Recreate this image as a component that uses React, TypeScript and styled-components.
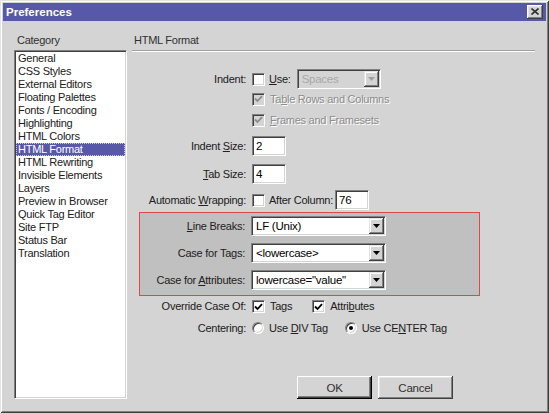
import React from "react";
import styled, { createGlobalStyle } from "styled-components";

const GlobalStyle = createGlobalStyle`
  html, body { margin: 0; padding: 0; background: #d4d4d4; }
  body {
    font-family: "Liberation Sans", Arial, sans-serif;
    font-size: 11px;
    letter-spacing: -0.25px;
    color: #202020;
  }
  * { box-sizing: border-box; }
`;

const FACE = "#d4d4d4";
const BLUE = "#5858a8";

const Window = styled.div`
  width: 549px;
  height: 413px;
  background: ${FACE};
  padding: 3px;
  box-shadow: inset 1px 1px #e4e4e4, inset -1px -1px #404040, inset 2px 2px #ffffff,
    inset -2px -2px #808080;
  display: flex;
  flex-direction: column;
`;

const TitleBar = styled.div`
  height: 18px;
  background: ${BLUE};
  display: flex;
  align-items: center;
  padding: 0 3px;
`;

const TitleText = styled.span`
  color: #fff;
  font-weight: bold;
  font-size: 11.5px;
  letter-spacing: 0;
`;

const CloseButton = styled.div`
  margin-left: auto;
  width: 16px;
  height: 14px;
  background: ${FACE};
  box-shadow: inset -1px -1px #404040, inset 1px 1px #ffffff, inset -2px -2px #808080,
    inset 2px 2px #e4e4e4;
  display: flex;
  align-items: center;
  justify-content: center;
  padding-bottom: 1px;
`;

const Body = styled.div`
  flex: 1;
  display: flex;
`;

const LeftColumn = styled.div`
  margin-left: 11px;
  width: 113px;
  display: flex;
  flex-direction: column;
`;

const RightColumn = styled.div`
  margin-left: 5px;
  width: 403px;
  display: flex;
  flex-direction: column;
`;

const SectionTitle = styled.div<{ $pl: number }>`
  padding-top: 13px;
  padding-left: ${(p) => p.$pl}px;
  line-height: 13px;
  height: 26px;
  color: #303030;
`;

const ListBox = styled.div`
  margin-top: 3px;
  height: 349px;
  background: #fff;
  border: 1px solid;
  border-color: #808080 #ffffff #ffffff #808080;
  box-shadow: inset 1px 1px #404040, inset -1px -1px ${FACE};
  padding: 1px;
  display: flex;
  flex-direction: column;
`;

const ListItem = styled.div<{ $selected?: boolean }>`
  height: 13px;
  line-height: 13px;
  padding-left: 2px;
  white-space: nowrap;
  background: ${(p) => (p.$selected ? BLUE : "transparent")};
  color: ${(p) => (p.$selected ? "#fff" : "#202020")};
  outline: ${(p) => (p.$selected ? "1px dotted #c8c8ff" : "none")};
  outline-offset: -1px;
`;

const Separator = styled.div`
  margin-top: 3px;
  height: 2px;
  border-top: 1px solid #a0a0a0;
  border-bottom: 1px solid #ffffff;
`;

const Form = styled.div`
  margin-top: 17px;
  margin-left: 7px;
  width: 341px;
  display: flex;
  flex-direction: column;
`;

const Row = styled.div<{ $h: number; $mt?: number; $lw?: number }>`
  display: grid;
  grid-template-columns: ${(p) => p.$lw ?? 107}px auto;
  column-gap: 6px;
  align-items: center;
  height: ${(p) => p.$h}px;
  margin-top: ${(p) => p.$mt ?? 0}px;
`;

const Label = styled.div`
  text-align: right;
  white-space: nowrap;
  line-height: 13px;
  color: #202020;
`;

const Key = styled.span`
  text-decoration: underline;
  text-underline-offset: 1px;
`;

const Controls = styled.div`
  display: flex;
  align-items: center;
  height: 100%;
`;

const Text = styled.span<{ $ml?: number; $disabled?: boolean }>`
  margin-left: ${(p) => p.$ml ?? 0}px;
  white-space: nowrap;
  line-height: 13px;
  color: ${(p) => (p.$disabled ? "#8c8c8c" : "#202020")};
  text-shadow: ${(p) => (p.$disabled ? "1px 1px 0 #ffffff" : "none")};
`;

const sunken = `
  border: 1px solid;
  border-color: #808080 #ffffff #ffffff #808080;
  box-shadow: inset 1px 1px #404040, inset -1px -1px ${FACE};
`;

const CheckBox = styled.span<{ $disabled?: boolean; $ml?: number }>`
  ${sunken}
  width: 13px;
  height: 13px;
  flex: none;
  margin-left: ${(p) => p.$ml ?? 0}px;
  background: ${(p) => (p.$disabled ? FACE : "#fff")};
  display: flex;
  align-items: center;
  justify-content: center;
`;

const Radio = styled.span<{ $ml?: number }>`
  width: 12px;
  height: 12px;
  flex: none;
  margin-left: ${(p) => p.$ml ?? 0}px;
  border-radius: 50%;
  background: #fff;
  border: 1px solid;
  border-color: #808080 #ffffff #ffffff #808080;
  box-shadow: inset 1px 1px #404040, inset -1px -1px ${FACE};
  display: flex;
  align-items: center;
  justify-content: center;
`;

const RadioDot = styled.span`
  width: 4px;
  height: 4px;
  border-radius: 50%;
  background: #000;
`;

const TextField = styled.div<{ $w: number; $ml?: number }>`
  ${sunken}
  width: ${(p) => p.$w}px;
  height: 20px;
  margin-left: ${(p) => p.$ml ?? 0}px;
  background: #fff;
  color: #000;
  padding-left: 3px;
  display: flex;
  align-items: center;
  font-size: 11.5px;
`;

const SelectBox = styled.div<{ $w: number; $ml?: number; $disabled?: boolean }>`
  ${sunken}
  width: ${(p) => p.$w}px;
  height: 20px;
  margin-left: ${(p) => p.$ml ?? 0}px;
  background: ${(p) => (p.$disabled ? FACE : "#fff")};
  color: ${(p) => (p.$disabled ? "#a8a8a8" : "#000")};
  display: flex;
  align-items: center;
  padding: 1px 1px 1px 4px;
  font-size: 11.5px;
`;

const SelectValue = styled.span`
  flex: 1;
  white-space: nowrap;
`;

const ArrowButton = styled.span`
  width: 15px;
  height: 16px;
  background: ${FACE};
  box-shadow: inset -1px -1px #404040, inset 1px 1px #e4e4e4, inset -2px -2px #808080,
    inset 2px 2px #ffffff;
  display: flex;
  align-items: center;
  justify-content: center;
`;

const HighlightBox = styled.div`
  margin-top: 2px;
  width: 341px;
  border: 1px solid #e04848;
  background: #c0c0c0;
  padding: 3px 0 5px 0;
  display: flex;
  flex-direction: column;
  gap: 7px;
`;

const ButtonRow = styled.div`
  margin-top: 37px;
  padding-left: 165px;
  display: flex;
  gap: 6px;
`;

const PushButton = styled.div<{ $default?: boolean }>`
  width: 75px;
  height: 23px;
  background: ${FACE};
  display: flex;
  align-items: center;
  justify-content: center;
  color: #303030;
  font-size: 11.5px;
  box-shadow: ${(p) =>
    p.$default
      ? "inset -1px -1px #000000, inset 1px 1px #ffffff, inset -2px -2px #404040, inset -3px -3px #808080"
      : "inset -1px -1px #404040, inset 1px 1px #ffffff, inset -2px -2px #808080, inset 2px 2px #e4e4e4"};
`;

const Check = ({ color }: { color: string }) => (
  <svg width="9" height="8" viewBox="0 0 9 8">
    <polyline points="1,3.5 3.5,6 8,1.2" fill="none" stroke={color} strokeWidth="1.8" />
  </svg>
);

const Arrow = ({ color }: { color: string }) => (
  <svg width="7" height="4" viewBox="0 0 7 4">
    <polygon points="0,0 7,0 3.5,4" fill={color} />
  </svg>
);

const Select = ({ value, w, ml, disabled }: { value: string; w: number; ml?: number; disabled?: boolean }) => (
  <SelectBox $w={w} $ml={ml} $disabled={disabled}>
    <SelectValue>{value}</SelectValue>
    <ArrowButton>
      <Arrow color={disabled ? "#a0a0a0" : "#000"} />
    </ArrowButton>
  </SelectBox>
);

const categories = [
  "General",
  "CSS Styles",
  "External Editors",
  "Floating Palettes",
  "Fonts / Encoding",
  "Highlighting",
  "HTML Colors",
  "HTML Format",
  "HTML Rewriting",
  "Invisible Elements",
  "Layers",
  "Preview in Browser",
  "Quick Tag Editor",
  "Site FTP",
  "Status Bar",
  "Translation",
];

export default function App() {
  return (
    <>
      <GlobalStyle />
      <Window>
        <TitleBar>
          <TitleText>Preferences</TitleText>
          <CloseButton>
            <svg width="8" height="7" viewBox="0 0 8 7">
              <path d="M0.5 0.5 L7.5 6.5 M7.5 0.5 L0.5 6.5" stroke="#303030" strokeWidth="1.6" />
            </svg>
          </CloseButton>
        </TitleBar>
        <Body>
          <LeftColumn>
            <SectionTitle $pl={3}>Category</SectionTitle>
            <ListBox>
              {categories.map((c) => (
                <ListItem key={c} $selected={c === "HTML Format"}>
                  {c}
                </ListItem>
              ))}
            </ListBox>
          </LeftColumn>
          <RightColumn>
            <SectionTitle $pl={2}>HTML Format</SectionTitle>
            <Separator />
            <Form>
              <Row $h={20}>
                <Label>Indent:</Label>
                <Controls>
                  <CheckBox />
                  <Text $ml={4}>
                    <Key>U</Key>se:
                  </Text>
                  <Select value="Spaces" w={84} ml={6} disabled />
                </Controls>
              </Row>
              <Row $h={20}>
                <Label />
                <Controls>
                  <CheckBox $disabled>
                    <Check color="#8c8c8c" />
                  </CheckBox>
                  <Text $ml={5} $disabled>
                    Ta<Key>b</Key>le Rows and Columns
                  </Text>
                </Controls>
              </Row>
              <Row $h={22}>
                <Label />
                <Controls>
                  <CheckBox $disabled>
                    <Check color="#8c8c8c" />
                  </CheckBox>
                  <Text $ml={5} $disabled>
                    <Key>F</Key>rames and Framesets
                  </Text>
                </Controls>
              </Row>
              <Row $h={20} $mt={5}>
                <Label>
                  Indent <Key>S</Key>ize:
                </Label>
                <Controls>
                  <TextField $w={34}>2</TextField>
                </Controls>
              </Row>
              <Row $h={20} $mt={8}>
                <Label>
                  <Key>T</Key>ab Size:
                </Label>
                <Controls>
                  <TextField $w={34}>4</TextField>
                </Controls>
              </Row>
              <Row $h={20} $mt={6}>
                <Label>
                  Automatic <Key>W</Key>rapping:
                </Label>
                <Controls>
                  <CheckBox />
                  <Text $ml={4}>After Column:</Text>
                  <TextField $w={34} $ml={2}>
                    76
                  </TextField>
                </Controls>
              </Row>
              <HighlightBox>
                <Row $h={20} $lw={105}>
                  <Label>
                    <Key>L</Key>ine Breaks:
                  </Label>
                  <Controls>
                    <Select value="LF (Unix)" w={135} />
                  </Controls>
                </Row>
                <Row $h={20} $lw={105}>
                  <Label>Case for Tags:</Label>
                  <Controls>
                    <Select value="<lowercase>" w={135} />
                  </Controls>
                </Row>
                <Row $h={20} $lw={105}>
                  <Label>
                    Case for <Key>A</Key>ttributes:
                  </Label>
                  <Controls>
                    <Select value={'lowercase="value"'} w={135} />
                  </Controls>
                </Row>
              </HighlightBox>
              <Row $h={21}>
                <Label>Override Case Of:</Label>
                <Controls>
                  <CheckBox>
                    <Check color="#000" />
                  </CheckBox>
                  <Text $ml={5}>Tags</Text>
                  <CheckBox $ml={20}>
                    <Check color="#000" />
                  </CheckBox>
                  <Text $ml={5}>
                    Attri<Key>b</Key>utes
                  </Text>
                </Controls>
              </Row>
              <Row $h={22}>
                <Label>Centering:</Label>
                <Controls>
                  <Radio />
                  <Text $ml={5}>
                    Use <Key>D</Key>IV Tag
                  </Text>
                  <Radio $ml={17}>
                    <RadioDot />
                  </Radio>
                  <Text $ml={5}>
                    Use CE<Key>N</Key>TER Tag
                  </Text>
                </Controls>
              </Row>
            </Form>
            <ButtonRow>
              <PushButton $default>OK</PushButton>
              <PushButton>Cancel</PushButton>
            </ButtonRow>
          </RightColumn>
        </Body>
      </Window>
    </>
  );
}
